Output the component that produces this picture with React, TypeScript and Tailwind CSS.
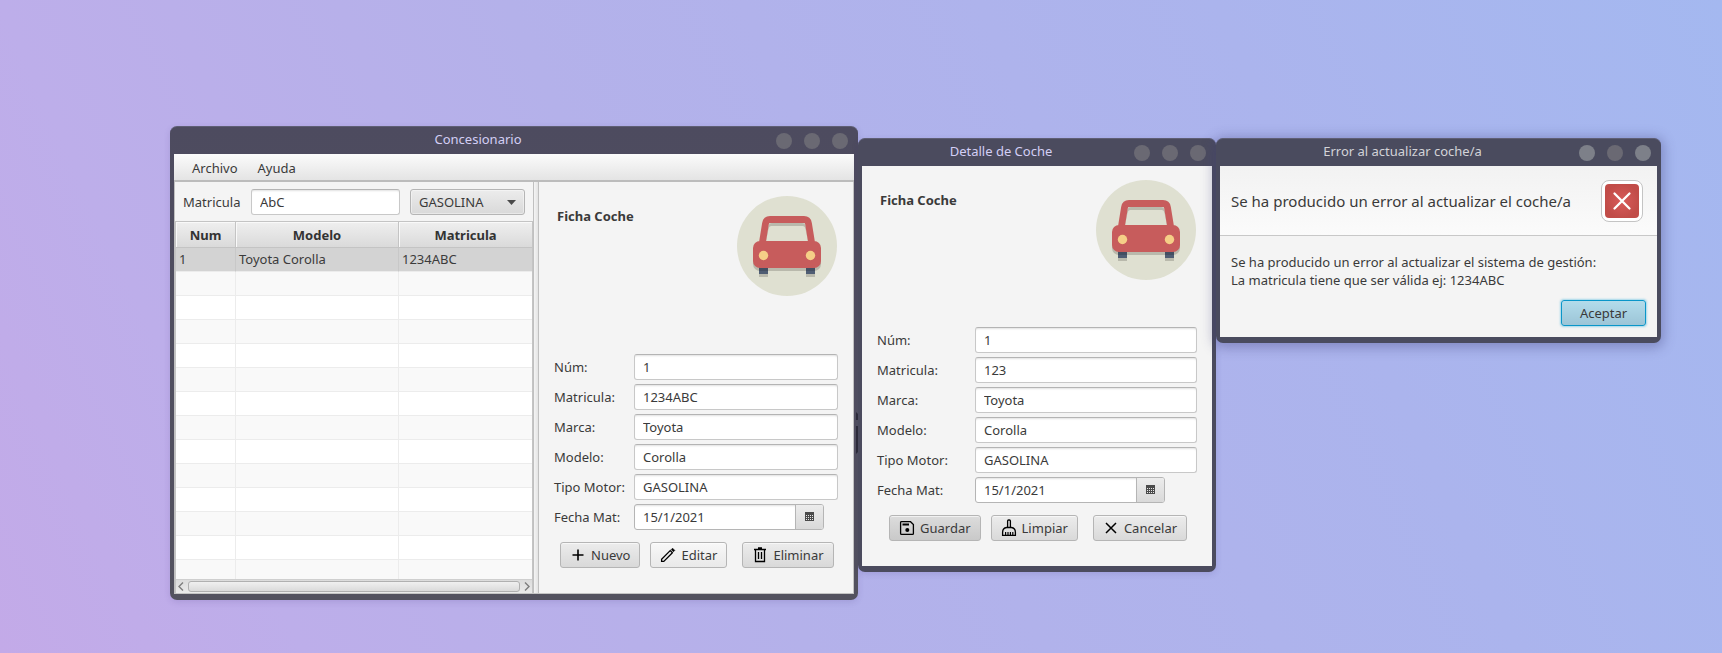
import type { ReactNode } from "react";

const fieldClass =
  "h-[26px] w-full min-w-0 rounded-[3px] border border-[#c8c8c8] border-t-[#b4b4b4] bg-white pl-2 pr-2 text-[13px] text-[#3a3a3a] shadow-[inset_0_2px_2px_-1px_rgba(0,0,0,0.12)] outline-none";

type WindowProps = {
  title: string;
  active?: boolean;
  className?: string;
  children: ReactNode;
};

function AppWindow({ title, active = false, className = "", children }: WindowProps) {
  const side = active ? "bg-[#7d8089]" : "bg-[#6a6973]";
  return (
    <section
      aria-label={title}
      className={`relative flex flex-col rounded-[7px] border-t border-[#5f5f75] px-1 pb-[6px] ${className}`}
    >
      <header className="flex h-[27px] items-center pl-[6px] pr-[6px]">
        <h1
          className={`flex-1 pb-1 text-center text-[13px] leading-[18px] ${
            active ? "text-[#d3d3d8]" : "text-[#d3cff5]"
          }`}
        >
          {title}
        </h1>
        <div className="flex gap-3">
          <button type="button" aria-label="Minimizar" className={`size-4 rounded-full ${side}`} />
          <button type="button" aria-label="Maximizar" className="size-4 rounded-full bg-[#6a6973]" />
          <button type="button" aria-label="Cerrar" className={`size-4 rounded-full ${side}`} />
        </div>
      </header>
      {children}
    </section>
  );
}

function CarPicture() {
  return (
    <svg viewBox="0 0 100 100" className="size-[100px]" role="img" aria-label="Coche">
      <circle cx="50" cy="50" r="50" fill="#dfe0d1" />
      <g fill="#b9b9ac">
        <rect x="16" y="48" width="68" height="27" rx="7" />
        <rect x="22" y="75" width="9" height="6" />
        <rect x="69" y="75" width="9" height="6" />
      </g>
      <rect x="22" y="70" width="9" height="8" fill="#4f5d73" />
      <rect x="69" y="70" width="9" height="8" fill="#4f5d73" />
      <rect x="22" y="72" width="9" height="3" fill="#434f62" />
      <rect x="69" y="72" width="9" height="3" fill="#434f62" />
      <path d="M29 45 31.300 30.500q.4-3.500 3.700-3.500h30q3.300 0 3.700 3.500L71 45z" fill="#b9b9ac" />
      <path d="M29 45 31.500 33q.5-3 3-3h31q2.500 0 3 3l2.500 12z" fill="#dfe0d1" />
      <path
        d="M25.500 46 28.500 27.500q.7-4 4.500-4h34q3.800 0 4.500 4L74.500 46"
        fill="none"
        stroke="#c75c5c"
        strokeWidth="6.800"
      />
      <rect x="16" y="45" width="68" height="27" rx="7" fill="#c75c5c" />
      <circle cx="26.500" cy="59.500" r="4.700" fill="#f5cf87" />
      <circle cx="73.500" cy="59.500" r="4.700" fill="#f5cf87" />
    </svg>
  );
}

function Glyph({ children }: { children: ReactNode }) {
  return (
    <svg
      viewBox="0 0 18 18"
      className="size-[18px] shrink-0"
      fill="none"
      stroke="#000"
      strokeWidth="1.300"
      aria-hidden="true"
    >
      {children}
    </svg>
  );
}

function PlusIcon() {
  return (
    <Glyph>
      <path d="M9 3.500v11M3.500 9h11" strokeWidth="1.600" />
    </Glyph>
  );
}

function PencilIcon() {
  return (
    <Glyph>
      <path d="M2.600 15.400v-2.200l8.600-8.600 2.200 2.200-8.600 8.600z" />
      <path d="M12.200 3.600 13.600 2.200 15.800 4.400 14.400 5.800z" fill="#000" strokeWidth=".6" />
    </Glyph>
  );
}

function TrashIcon() {
  return (
    <Glyph>
      <path d="M3 3.500h12M7 2h4" />
      <path d="M4.500 4v11.500h9V4" />
      <path d="M7.500 6v7M10.500 6v7" />
    </Glyph>
  );
}

function SaveIcon() {
  return (
    <Glyph>
      <path d="M3.500 2.700h9l2.900 2.900v8.900q0 .9-.9.900h-11q-.9 0-.9-.9v-11q0-.8.9-.8z" />
      <path d="M4.500 4.500h6.500v2H4.500z" fill="#000" stroke="none" />
      <circle cx="9.300" cy="11" r="2" fill="#000" stroke="none" />
    </Glyph>
  );
}

function BroomIcon() {
  return (
    <Glyph>
      <path d="M7.600 8V2q0-1 1-1h.8q1 0 1 1v6" />
      <path d="M2.600 16.400v-3q0-4.400 4-4.900h4.800q4 .5 4 4.900v3z" />
      <path d="M5.600 16v-3M8 16v-3M10.400 16v-3M12.800 16v-3" strokeWidth="1.200" />
    </Glyph>
  );
}

function CrossIcon() {
  return (
    <Glyph>
      <path d="m4 4 10 10M14 4 4 14" strokeWidth="1.500" />
    </Glyph>
  );
}

function CalendarIcon() {
  return (
    <svg viewBox="0 0 10 10" className="size-[10px]" shapeRendering="crispEdges" aria-hidden="true">
      <rect x="0" y="0" width="9" height="9" fill="#4a4a4a" />
      <g fill="#e6e6e6">
        {[3, 5, 7].map((y) =>
          [1, 3, 5, 7].map((x) => <rect key={`${x}-${y}`} x={x} y={y} width="1" height="1" />),
        )}
      </g>
    </svg>
  );
}

type ButtonTone = "normal" | "light" | "pressed";

const tones: Record<ButtonTone, string> = {
  normal: "bg-linear-to-b from-[#ececec] to-[#d9d9d9]",
  light: "bg-linear-to-b from-[#f8f8f8] to-[#e9e9e9]",
  pressed: "bg-linear-to-b from-[#dcdcdc] to-[#c9c9c9]",
};

function ActionButton({ icon, tone = "normal", children }: { icon: ReactNode; tone?: ButtonTone; children: ReactNode }) {
  return (
    <button
      type="button"
      className={`flex h-[26px] items-center gap-1 whitespace-nowrap rounded-[3px] border border-[#b5b5b5] pl-2 pr-[9px] text-[13px] leading-[18px] text-[#3a3a3a] shadow-[inset_0_1px_0_rgba(255,255,255,0.6)] ${tones[tone]}`}
    >
      {icon}
      {children}
    </button>
  );
}

type FormProps = {
  id: string;
  matricula: string;
  columns: string;
};

function CarForm({ id, matricula, columns }: FormProps) {
  const fields: [string, string][] = [
    ["Núm", "1"],
    ["Matricula", matricula],
    ["Marca", "Toyota"],
    ["Modelo", "Corolla"],
    ["Tipo Motor", "GASOLINA"],
  ];
  return (
    <form className={`grid items-center gap-y-1 ${columns}`}>
      {fields.map(([label, value]) => (
        <div key={label} className="contents">
          <label htmlFor={`${id}-${label}`}>{label}:</label>
          <input id={`${id}-${label}`} defaultValue={value} className={fieldClass} />
        </div>
      ))}
      <label htmlFor={`${id}-fecha`}>Fecha Mat:</label>
      <div className="flex h-[26px] w-[190px] overflow-hidden rounded-[3px] border border-[#b5b5b5] bg-white">
        <input
          id={`${id}-fecha`}
          defaultValue="15/1/2021"
          className="min-w-0 flex-1 pl-2 text-[13px] text-[#3a3a3a] shadow-[inset_0_2px_2px_-1px_rgba(0,0,0,0.12)] outline-none"
        />
        <button
          type="button"
          aria-label="Abrir calendario"
          className="flex w-7 items-center justify-center border-l border-[#b5b5b5] bg-linear-to-b from-[#ececec] to-[#d9d9d9]"
        >
          <CalendarIcon />
        </button>
      </div>
    </form>
  );
}

function CarTable() {
  const rows = [["1", "Toyota Corolla", "1234ABC"], ...Array.from({ length: 13 }, () => ["", "", ""])];
  return (
    <table className="w-full table-fixed border-separate border-spacing-0">
      <colgroup>
        <col className="w-[60px]" />
        <col className="w-[163px]" />
        <col />
      </colgroup>
      <thead>
        <tr>
          {["Num", "Modelo", "Matricula"].map((name) => (
            <th
              key={name}
              className="h-[26px] border-b border-r border-[#c4c4c4] bg-linear-to-b from-[#efefef] to-[#dadada] p-0 text-[13px] font-bold leading-[18px] text-[#333333] shadow-[inset_1px_1px_0_#f9f9f9] last:border-r-0"
            >
              {name}
            </th>
          ))}
        </tr>
      </thead>
      <tbody>
        {rows.map((row, i) => (
          <tr key={i} className={i === 0 ? "h-6 bg-[#d3d3d3]" : "h-6 odd:bg-white even:bg-[#f9f9f9] last:h-[19px]"}>
            {row.map((cell, j) => (
              <td
                key={j}
                className={`border-r p-0 pb-[2px] pl-[3px] text-[13px] leading-[18px] text-[#3b3b3b] last:border-r-0 ${
                  i === 0 ? "border-[#c8c8c8]" : "border-[#ececec]"
                } ${i < rows.length - 1 ? "border-b border-b-[#ececec]" : ""}`}
              >
                {cell}
              </td>
            ))}
          </tr>
        ))}
      </tbody>
    </table>
  );
}

function ScrollBar() {
  return (
    <div className="flex h-[14px] items-center gap-1 border-t border-[#cfcfcf] bg-linear-to-b from-[#dcdcdc] to-[#ebebeb] px-[2px]">
      <button type="button" aria-label="Desplazar a la izquierda">
        <svg viewBox="0 0 6 9" className="h-[9px] w-[6px]" fill="none" stroke="#7d7d7d" strokeWidth="1.400">
          <path d="M5 .5 1 4.500l4 4" />
        </svg>
      </button>
      <div className="h-[11px] flex-1 rounded-[3px] border border-[#b0b0b0] bg-linear-to-b from-[#f0f0f0] to-[#dadada]" />
      <button type="button" aria-label="Desplazar a la derecha">
        <svg viewBox="0 0 6 9" className="h-[9px] w-[6px]" fill="none" stroke="#7d7d7d" strokeWidth="1.400">
          <path d="m1 .5 4 4-4 4" />
        </svg>
      </button>
    </div>
  );
}

function MainWindow() {
  return (
    <AppWindow title="Concesionario" className="bg-linear-to-b from-[#4d4b5f] to-[#53525f] shadow-[0_2px_6px_rgba(60,50,120,0.15)]">
      <nav className="flex h-7 items-center gap-5 border-b-2 border-[#bcbcbc] bg-linear-to-b from-[#fbfbfb] to-[#e4e4e4] px-[18px] pt-[2px]">
        <button type="button">Archivo</button>
        <button type="button">Ayuda</button>
      </nav>
      <div className="flex border-b border-r border-[#c4c4c4] bg-[#f4f4f4]">
        <div className="flex min-w-0 flex-1 flex-col border-l border-r border-[#c0c0c0]">
          <div className="flex h-[39px] items-center pl-2 pr-2 pt-[1px]">
            <label htmlFor="filtro-matricula" className="w-[68px] shrink-0">
              Matricula
            </label>
            <input id="filtro-matricula" defaultValue="AbC" className={fieldClass} />
            <div className="relative ml-[10px] w-[115px] shrink-0">
              <select
                aria-label="Tipo de motor"
                defaultValue="GASOLINA"
                className="h-[26px] w-full appearance-none rounded-[3px] border border-[#b5b5b5] bg-linear-to-b from-[#ececec] to-[#d9d9d9] pl-2 text-[13px] text-[#3a3a3a] shadow-[inset_0_0_0_1px_rgba(255,255,255,0.4)]"
              >
                <option>GASOLINA</option>
                <option>DIESEL</option>
              </select>
              <svg viewBox="0 0 9 5" className="pointer-events-none absolute right-[9px] top-[11px] h-[5px] w-[9px]" fill="#4a4a4a" aria-hidden="true">
                <path d="M0 0h9L4.500 5z" />
              </svg>
            </div>
          </div>
          <div className="border-x border-t border-[#c4c4c4]">
            <CarTable />
            <ScrollBar />
          </div>
        </div>
        <div className="w-1 bg-linear-to-r from-[#f4f4f4] to-[#e4e4e4]" />
        <div className="w-[315px] border-l border-[#c0c0c0] px-[15px] pt-[14px]">
          <div className="flex justify-between pb-[58px] pl-[3px] pr-px">
            <h2 className="pt-[11px] font-bold">Ficha Coche</h2>
            <CarPicture />
          </div>
          <CarForm id="ficha" matricula="1234ABC" columns="grid-cols-[80px_1fr]" />
          <div className="flex pl-[6px] pt-3">
            <ActionButton icon={<PlusIcon />}>Nuevo</ActionButton>
            <div className="ml-[10px] mr-[15px]">
              <ActionButton tone="light" icon={<PencilIcon />}>
                Editar
              </ActionButton>
            </div>
            <ActionButton icon={<TrashIcon />}>Eliminar</ActionButton>
          </div>
        </div>
      </div>
      <svg viewBox="0 0 2 42" className="absolute right-0 top-[285px] h-[42px] w-[2px]" fill="#2c2b38" aria-hidden="true">
        <path d="M0 0l2 2v6H0zM0 14h2v26l-2 2z" />
      </svg>
    </AppWindow>
  );
}

function DetailWindow() {
  return (
    <AppWindow title="Detalle de Coche" className="mt-3 bg-[#4b4b5e] shadow-[0_2px_6px_rgba(60,50,120,0.15)]">
      <div className="bg-[#f4f4f4] px-[15px] pb-[25px] pt-[14px]">
        <div className="flex justify-between pb-[47px] pl-[3px] pr-px">
          <h2 className="pt-[11px] font-bold">Ficha Coche</h2>
          <CarPicture />
        </div>
        <CarForm id="detalle" matricula="123" columns="grid-cols-[98px_1fr]" />
        <div className="flex pl-3 pt-3">
          <ActionButton tone="pressed" icon={<SaveIcon />}>
            Guardar
          </ActionButton>
          <div className="ml-[10px] mr-[15px]">
            <ActionButton icon={<BroomIcon />}>Limpiar</ActionButton>
          </div>
          <ActionButton icon={<CrossIcon />}>Cancelar</ActionButton>
        </div>
      </div>
    </AppWindow>
  );
}

function ErrorWindow() {
  return (
    <AppWindow
      title="Error al actualizar coche/a"
      active
      className="mt-3 bg-[#4a4b5e] shadow-[0_2px_12px_3px_rgba(60,60,120,0.35)]"
    >
      <div className="flex items-center justify-between border-b border-[#c8c8c8] bg-linear-to-b from-[#f2f2f2] to-[#fbfbfb] pb-[13px] pl-[11px] pr-[14px] pt-[14px]">
        <p className="text-[15px] leading-5">Se ha producido un error al actualizar el coche/a</p>
        <div className="size-[42px] shrink-0 rounded-[8px] border border-[#c4c4c4] bg-white p-[3px]">
          <svg viewBox="0 0 34 34" className="size-[34px]" role="img" aria-label="Error">
            <defs>
              <radialGradient id="alert-red">
                <stop offset="0" stopColor="#d85a5a" />
                <stop offset="1" stopColor="#c14c48" />
              </radialGradient>
            </defs>
            <rect width="34" height="34" rx="4" fill="url(#alert-red)" />
            <path d="m9.500 9.500 15 15M24.500 9.500l-15 15" stroke="#fff" strokeWidth="2.300" strokeLinecap="round" />
          </svg>
        </div>
      </div>
      <div className="flex flex-col bg-[#f4f4f4] px-[11px] pb-[11px] pt-[17px]">
        <p className="leading-[18px]">
          Se ha producido un error al actualizar el sistema de gestión:
          <br />
          La matricula tiene que ser válida ej: 1234ABC
        </p>
        <button
          type="button"
          className="mt-[11px] h-[26px] w-[85px] self-end rounded-[3px] border border-[#0a96c9] bg-linear-to-b from-[#b3dceb] to-[#9cc5d7] leading-[18px] shadow-[0_0_2px_1px_rgba(3,158,211,0.35)]"
        >
          Aceptar
        </button>
      </div>
    </AppWindow>
  );
}

export default function App() {
  return (
    <main className="min-h-screen bg-[linear-gradient(65deg,#c3aae8_0%,#bdaeea_15%,#b4b1ea_40%,#abb4ed_75%,#a4b8f0_100%)] pl-[170px] pr-[61px] pt-[126px] font-['Noto_Sans',sans-serif] text-[13px] leading-[18px] text-[#3a3a3a]">
      <div className="grid grid-cols-[688fr_358fr_445fr] items-start">
        <MainWindow />
        <DetailWindow />
        <ErrorWindow />
      </div>
    </main>
  );
}
